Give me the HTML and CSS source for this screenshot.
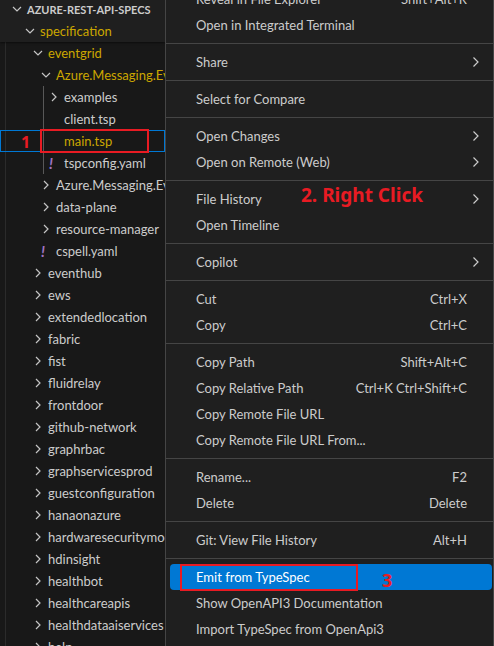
FILE: index.html
```html
<!DOCTYPE html>
<html>
<head>
<meta charset="utf-8">
<link rel="stylesheet" href="styles.css">
</head>
<body>
<div class="sidebar">
  <div class="sticky">
    <div class="row hdr"><span class="tw"><svg viewBox="0 0 16 16"><polyline points="4,6 8,10 12,6"/></svg></span><span class="lbl">AZURE-REST-API-SPECS</span></div>
    <div class="row d0 mod"><span class="tw"><svg viewBox="0 0 16 16"><polyline points="4,6 8,10 12,6"/></svg></span><span class="lbl">specification</span></div>
  </div>
  <div class="rest">
    <div class="row d1 mod"><span class="tw"><svg viewBox="0 0 16 16"><polyline points="4,6 8,10 12,6"/></svg></span><span class="lbl">eventgrid</span></div>
    <div class="row d2 mod"><span class="tw"><svg viewBox="0 0 16 16"><polyline points="4,6 8,10 12,6"/></svg></span><span class="lbl">Azure.Messaging.EventGrid</span></div>
    <div class="group">
      <div class="row d3"><span class="tw"><svg viewBox="0 0 16 16"><polyline points="6,4 10,8 6,12"/></svg></span><span class="lbl">examples</span></div>
      <div class="row d3"><span class="tw"></span><span class="lbl">client.tsp</span></div>
      <div class="row d3 mod sel"><span class="tw"></span><span class="lbl">main.tsp</span></div>
      <div class="row d3"><span class="tw yaml">!</span><span class="lbl">tspconfig.yaml</span></div>
    </div>
    <div class="row d2"><span class="tw"><svg viewBox="0 0 16 16"><polyline points="6,4 10,8 6,12"/></svg></span><span class="lbl">Azure.Messaging.EventGrid.SystemEvents</span></div>
    <div class="row d2"><span class="tw"><svg viewBox="0 0 16 16"><polyline points="6,4 10,8 6,12"/></svg></span><span class="lbl">data-plane</span></div>
    <div class="row d2"><span class="tw"><svg viewBox="0 0 16 16"><polyline points="6,4 10,8 6,12"/></svg></span><span class="lbl">resource-manager</span></div>
    <div class="row d2"><span class="tw yaml">!</span><span class="lbl">cspell.yaml</span></div>
    <div class="row d1"><span class="tw"><svg viewBox="0 0 16 16"><polyline points="6,4 10,8 6,12"/></svg></span><span class="lbl">eventhub</span></div>
    <div class="row d1"><span class="tw"><svg viewBox="0 0 16 16"><polyline points="6,4 10,8 6,12"/></svg></span><span class="lbl">ews</span></div>
    <div class="row d1"><span class="tw"><svg viewBox="0 0 16 16"><polyline points="6,4 10,8 6,12"/></svg></span><span class="lbl">extendedlocation</span></div>
    <div class="row d1"><span class="tw"><svg viewBox="0 0 16 16"><polyline points="6,4 10,8 6,12"/></svg></span><span class="lbl">fabric</span></div>
    <div class="row d1"><span class="tw"><svg viewBox="0 0 16 16"><polyline points="6,4 10,8 6,12"/></svg></span><span class="lbl">fist</span></div>
    <div class="row d1"><span class="tw"><svg viewBox="0 0 16 16"><polyline points="6,4 10,8 6,12"/></svg></span><span class="lbl">fluidrelay</span></div>
    <div class="row d1"><span class="tw"><svg viewBox="0 0 16 16"><polyline points="6,4 10,8 6,12"/></svg></span><span class="lbl">frontdoor</span></div>
    <div class="row d1"><span class="tw"><svg viewBox="0 0 16 16"><polyline points="6,4 10,8 6,12"/></svg></span><span class="lbl">github-network</span></div>
    <div class="row d1"><span class="tw"><svg viewBox="0 0 16 16"><polyline points="6,4 10,8 6,12"/></svg></span><span class="lbl">graphrbac</span></div>
    <div class="row d1"><span class="tw"><svg viewBox="0 0 16 16"><polyline points="6,4 10,8 6,12"/></svg></span><span class="lbl">graphservicesprod</span></div>
    <div class="row d1"><span class="tw"><svg viewBox="0 0 16 16"><polyline points="6,4 10,8 6,12"/></svg></span><span class="lbl">guestconfiguration</span></div>
    <div class="row d1"><span class="tw"><svg viewBox="0 0 16 16"><polyline points="6,4 10,8 6,12"/></svg></span><span class="lbl">hanaonazure</span></div>
    <div class="row d1"><span class="tw"><svg viewBox="0 0 16 16"><polyline points="6,4 10,8 6,12"/></svg></span><span class="lbl">hardwaresecuritymodules</span></div>
    <div class="row d1"><span class="tw"><svg viewBox="0 0 16 16"><polyline points="6,4 10,8 6,12"/></svg></span><span class="lbl">hdinsight</span></div>
    <div class="row d1"><span class="tw"><svg viewBox="0 0 16 16"><polyline points="6,4 10,8 6,12"/></svg></span><span class="lbl">healthbot</span></div>
    <div class="row d1"><span class="tw"><svg viewBox="0 0 16 16"><polyline points="6,4 10,8 6,12"/></svg></span><span class="lbl">healthcareapis</span></div>
    <div class="row d1"><span class="tw"><svg viewBox="0 0 16 16"><polyline points="6,4 10,8 6,12"/></svg></span><span class="lbl">healthdataaiservices</span></div>
    <div class="row d1"><span class="tw"><svg viewBox="0 0 16 16"><polyline points="6,4 10,8 6,12"/></svg></span><span class="lbl">help</span></div>
  </div>
  <div class="note n1">1</div>
  <div class="redbox rb1"></div>
</div>
<div class="menu">
  <div class="item"><span class="lbl">Reveal in File Explorer</span><span class="key">Shift+Alt+R</span></div>
  <div class="item"><span class="lbl">Open in Integrated Terminal</span></div>
  <div class="sep"></div>
  <div class="item sub"><span class="lbl">Share</span><svg class="arr" viewBox="0 0 8 12"><polyline points="1.5,1.5 6,6 1.5,10.5"/></svg></div>
  <div class="sep"></div>
  <div class="item"><span class="lbl">Select for Compare</span></div>
  <div class="sep"></div>
  <div class="item sub"><span class="lbl">Open Changes</span><svg class="arr" viewBox="0 0 8 12"><polyline points="1.5,1.5 6,6 1.5,10.5"/></svg></div>
  <div class="item sub"><span class="lbl">Open on Remote (Web)</span><svg class="arr" viewBox="0 0 8 12"><polyline points="1.5,1.5 6,6 1.5,10.5"/></svg></div>
  <div class="sep"></div>
  <div class="item sub"><span class="lbl">File History</span><svg class="arr" viewBox="0 0 8 12"><polyline points="1.5,1.5 6,6 1.5,10.5"/></svg></div>
  <div class="item"><span class="lbl">Open Timeline</span></div>
  <div class="sep"></div>
  <div class="item sub"><span class="lbl">Copilot</span><svg class="arr" viewBox="0 0 8 12"><polyline points="1.5,1.5 6,6 1.5,10.5"/></svg></div>
  <div class="sep"></div>
  <div class="item"><span class="lbl">Cut</span><span class="key">Ctrl+X</span></div>
  <div class="item"><span class="lbl">Copy</span><span class="key">Ctrl+C</span></div>
  <div class="sep"></div>
  <div class="item"><span class="lbl">Copy Path</span><span class="key">Shift+Alt+C</span></div>
  <div class="item"><span class="lbl">Copy Relative Path</span><span class="key">Ctrl+K Ctrl+Shift+C</span></div>
  <div class="item"><span class="lbl">Copy Remote File URL</span></div>
  <div class="item"><span class="lbl">Copy Remote File URL From...</span></div>
  <div class="sep"></div>
  <div class="item"><span class="lbl">Rename...</span><span class="key">F2</span></div>
  <div class="item"><span class="lbl">Delete</span><span class="key">Delete</span></div>
  <div class="sep"></div>
  <div class="item"><span class="lbl">Git: View File History</span><span class="key">Alt+H</span></div>
  <div class="sep"></div>
  <div class="item active"><span class="lbl">Emit from TypeSpec</span></div>
  <div class="item"><span class="lbl">Show OpenAPI3 Documentation</span></div>
  <div class="item"><span class="lbl">Import TypeSpec from OpenApi3</span></div>
  <div class="note n2">2. Right Click</div>
  <div class="note n3">3</div>
  <div class="redbox rb3"></div>
</div>
</body>
</html>
```
FILE: styles.css
```css
html, body {
  margin: 0;
  padding: 0;
}
body {
  width: 494px;
  height: 646px;
  overflow: hidden;
  background: #181818;
  display: flex;
  font-family: Lato, "Noto Sans", sans-serif;
  font-size: 13px;
  color: #cccccc;
}
.sidebar {
  width: 165px;
  flex: none;
  position: relative;
  overflow: hidden;
  margin-top: -2px;
}
.sticky {
  background: #1f1f1f;
  box-shadow: 0 1px 2px rgba(0,0,0,0.5);
  position: relative;
  z-index: 1;
}
.rest {
  background: linear-gradient(#2b2b2b, #2b2b2b) 5px 0 / 1px 100% no-repeat;
}
.row {
  height: 22px;
  display: flex;
  align-items: center;
  white-space: nowrap;
  box-sizing: border-box;
}
.tw {
  width: 16px;
  height: 16px;
  flex: none;
  margin-right: 2px;
  display: flex;
  align-items: center;
  justify-content: center;
}
.tw svg {
  width: 16px;
  height: 16px;
  fill: none;
  stroke: #c5c5c5;
  stroke-width: 1.2;
}
.yaml {
  color: #a074c4;
  font-style: italic;
  font-weight: bold;
  font-size: 15px;
  justify-content: flex-start;
  padding-left: 3px;
  box-sizing: border-box;
}
.lbl {
  white-space: nowrap;
}
.hdr { padding-left: 9px; font-weight: bold; font-size: 11px; }
.d0 { padding-left: 22px; }
.d1 { padding-left: 30px; }
.d2 { padding-left: 38px; }
.d3 { padding-left: 46px; }
.mod .lbl { color: #cca700; }
.group {
  background: linear-gradient(#585858, #585858) 43px 0 / 1px 100% no-repeat;
}
.sel {
  box-shadow: inset 0 0 0 1px #0078d4;
}
.menu {
  flex: 1;
  position: relative;
  background: #1f1f1f;
  border-left: 1px solid #454545;
  border-right: 1px solid #454545;
  margin-top: -14px;
  height: 660px;
}
.item {
  height: 26px;
  margin: 0 1px 0 4px;
  padding: 0 25px 0 26px;
  display: flex;
  align-items: center;
  justify-content: space-between;
  border-radius: 4px;
  white-space: nowrap;
}
.item.sub {
  padding-right: 12px;
}
.arr {
  width: 8px;
  height: 12px;
  fill: none;
  stroke: #cccccc;
  stroke-width: 1.2;
}
.active {
  background: #0078d4;
  color: #ffffff;
}
.sep {
  height: 1px;
  background: #454545;
  margin: 5px 0;
}
.note {
  position: absolute;
  color: #e81b23;
  font-family: "Noto Sans", sans-serif;
  font-weight: bold;
  line-height: 1;
  white-space: nowrap;
}
.n1 { left: 21px; top: 136px; font-size: 16px; }
.n2 { left: 135px; top: 200px; font-size: 19px; }
.n3 { left: 216px; top: 585px; font-size: 18px; }
.redbox {
  position: absolute;
  border: 2px solid #e81b23;
  box-sizing: border-box;
}
.rb1 { left: 40px; top: 131px; width: 109px; height: 24px; }
.rb3 { left: 14px; top: 578px; width: 178px; height: 27px; }
```
